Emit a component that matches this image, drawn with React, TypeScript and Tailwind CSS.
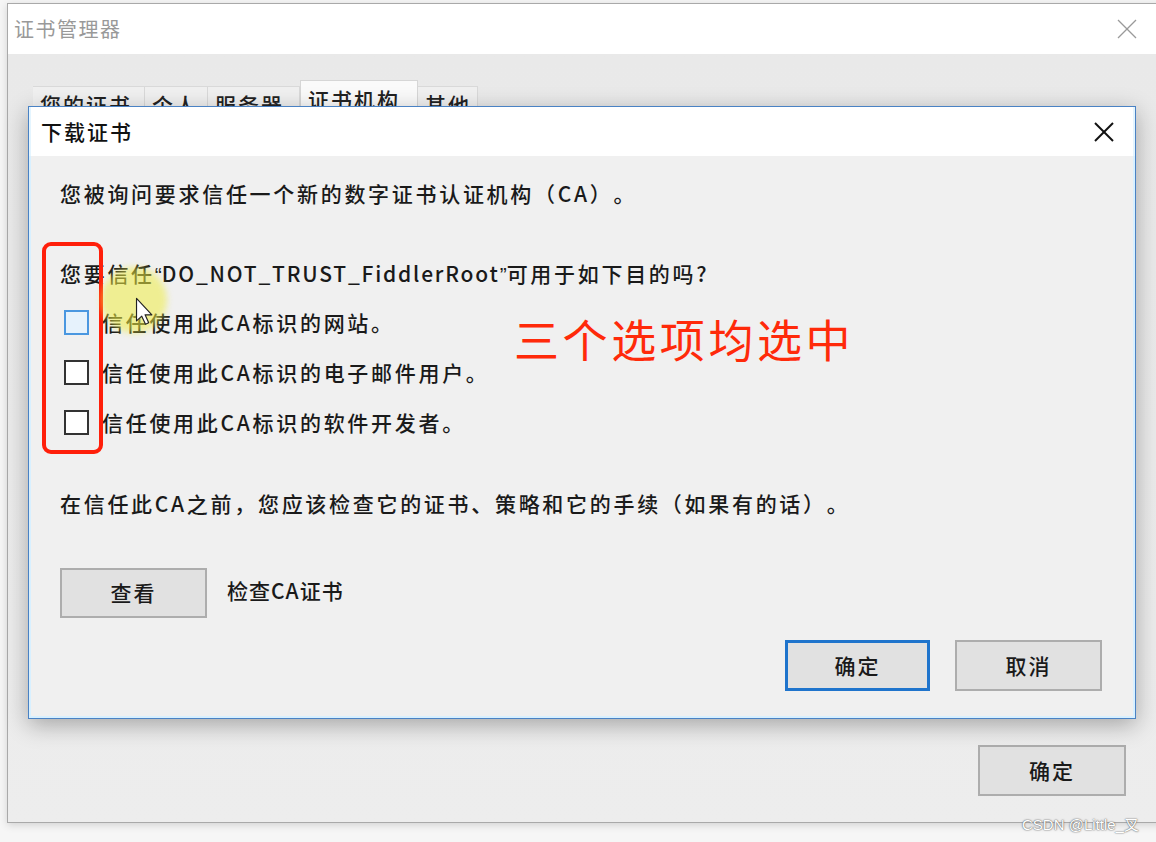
import React from "react";

const CJK = "[font-family:'Noto_Sans_CJK_SC','Noto_Sans',sans-serif] [text-spacing-trim:space-all]";
const Q = "[font-family:'Liberation_Sans',sans-serif] tracking-normal";

function CloseX({ size, color, stroke }: { size: number; color: string; stroke: number }) {
  return (
    <svg width={size} height={size} viewBox="0 0 20 20">
      <line x1="1" y1="1" x2="19" y2="19" stroke={color} strokeWidth={stroke} />
      <line x1="19" y1="1" x2="1" y2="19" stroke={color} strokeWidth={stroke} />
    </svg>
  );
}

function Checkbox({ hover }: { hover?: boolean }) {
  return (
    <div
      className={
        hover
          ? "w-[25px] h-[25px] border-2 border-[#4a97e0] bg-[#e6f2fc] shrink-0"
          : "w-[25px] h-[25px] border-2 border-[#333333] bg-white shrink-0"
      }
    />
  );
}

function Tab({ label, w, selected }: { label: string; w: number; selected?: boolean }) {
  return (
    <div
      className={
        selected
          ? "h-[40px] bg-[#fafafa] border border-b-0 border-[#d6d6d6] flex items-start pt-[4px] pl-[7px] tracking-[2px] text-[21px] leading-[28px] text-[#222] font-medium"
          : "h-[34px] bg-[#f0f0f0] border-t border-r border-[#d9d9d9] flex items-start pt-[3px] pl-[7px] tracking-[2px] text-[21px] leading-[28px] text-[#222] font-medium"
      }
      style={{ width: w }}
    >
      {label}
    </div>
  );
}

export default function App() {
  return (
    <div className={`relative w-[1156px] h-[842px] overflow-hidden bg-[#f6f6f6] ${CJK}`}>
      <div className="flex flex-col pt-[3px]">
        {/* outer window */}
        <div className="ml-[7px] w-[1160px] h-[820px] border border-[#a9a9a9] bg-[#ececec] flex flex-col shadow-[0_2px_8px_rgba(0,0,0,0.15)]">
          <div className="h-[50px] bg-white flex items-center justify-between pl-[6px] pr-[29px]">
            <span className="text-[20px] tracking-[1.5px] text-[#999999]">证书管理器</span>
            <CloseX size={20} color="#9a9a9a" stroke={1.3} />
          </div>
          <div className="flex-1 flex flex-col bg-gradient-to-b from-[#e9e9e9] to-[#ededed]">
            <div className="flex items-end pt-[26px] pl-[25px]">
              <Tab label="您的证书" w={112} />
              <Tab label="个人" w={63} />
              <Tab label="服务器" w={92} />
              <Tab label="证书机构" w={118} selected />
              <Tab label="其他" w={60} />
            </div>
            <div className="flex-1" />
            <div className="flex justify-end pr-[40px] pb-[26px]">
              <div className="w-[148px] h-[51px] bg-[#e1e1e1] border-2 border-[#adadad] flex items-center justify-center text-[21px] tracking-[2px] text-[#1a1a1a] font-medium">
                确定
              </div>
            </div>
          </div>
        </div>
      </div>

      {/* dialog */}
      <div className="absolute left-[28px] top-[106px] w-[1108px] h-[613px] border border-[#4a82c4] shadow-[0_6px_22px_rgba(0,0,0,0.3)] flex flex-col">
        <div className="h-[49px] bg-white flex items-center justify-between pl-[10px] pr-[19px] border-x-2 border-[#e4f5ff]">
          <span className="text-[21px] tracking-[2px] text-[#111] font-medium">下载证书</span>
          <CloseX size={20} color="#111" stroke={2} />
        </div>
        <div className="flex-1 bg-[#f0f0f0] border-x-2 border-b-2 border-[#d8f0ff] pl-[29px] pr-[31px] flex flex-col text-[21px] tracking-[2.7px] text-[#1a1a1a] font-medium">
          <div className="mt-[22px] h-[30px] leading-[30px]">您被询问要求信任一个新的数字证书认证机构（CA）。</div>
          <div className="mt-[50px] h-[30px] leading-[30px]">
            您要信任<span className={Q}>“</span>
            <span className="tracking-[1.8px]">DO_NOT_TRUST_FiddlerRoot</span>
            <span className={Q}>”</span>可用于如下目的吗?
          </div>
          <div className="mt-[9px] flex flex-col">
            <div className="h-[50px] flex items-center pl-[4px] gap-[13px]">
              <Checkbox hover />
              <span className="leading-[30px]">信任使用此CA标识的网站。</span>
            </div>
            <div className="h-[50px] flex items-center pl-[4px] gap-[13px]">
              <Checkbox />
              <span className="leading-[30px]">信任使用此CA标识的电子邮件用户。</span>
            </div>
            <div className="h-[50px] flex items-center pl-[4px] gap-[13px]">
              <Checkbox />
              <span className="leading-[30px]">信任使用此CA标识的软件开发者。</span>
            </div>
          </div>
          <div className="mt-[41px] h-[30px] leading-[30px]">
            在信任此CA之前，您应该检查它的证书、策略和它的手续（如果有的话）。
          </div>
          <div className="mt-[50px] flex items-start gap-[20px]">
            <div className="w-[147px] h-[50px] bg-[#e1e1e1] border-2 border-[#adadad] flex items-center justify-center tracking-[2px]">
              查看
            </div>
            <span className="mt-[7px] leading-[30px] tracking-[1px]">检查CA证书</span>
          </div>
          <div className="mt-[22px] flex justify-end gap-[25px]">
            <div className="w-[145px] h-[51px] bg-[#e1e1e1] border-[3px] border-[#1f74cc] flex items-center justify-center tracking-[2px]">
              确定
            </div>
            <div className="w-[147px] h-[51px] bg-[#e1e1e1] border-2 border-[#adadad] flex items-center justify-center tracking-[2px]">
              取消
            </div>
          </div>
        </div>
      </div>

      {/* red annotation box */}
      <div className="absolute left-[42px] top-[242px] w-[61px] h-[212px] border-[4px] border-[#ff1f0a] rounded-[9px]" />

      {/* annotation text */}
      <div className="absolute left-[514px] top-[310px] text-[45px] leading-[58px] tracking-[3.6px] text-[#ff2a0a]">
        三个选项均选中
      </div>

      {/* cursor highlight */}
      <div className="absolute left-[101px] top-[267px] w-[66px] h-[66px] rounded-full bg-[rgba(238,236,70,0.55)] blur-[3px]" />
      <svg className="absolute left-[135px] top-[297px]" width="19" height="29" viewBox="0 0 13 20">
        <path
          d="M1 1 L1 16.5 L4.6 13.2 L7.2 18.8 L9.4 17.8 L6.9 12.3 L11.6 12.3 Z"
          fill="white"
          stroke="#222"
          strokeWidth="0.8"
          strokeLinejoin="round"
        />
      </svg>

      {/* watermark */}
      <div className="absolute left-[1022px] top-[815px] text-[15px] leading-[20px] text-white [font-family:'Liberation_Sans','Noto_Sans_CJK_SC',sans-serif] [text-shadow:0_0_1px_#555,0_0_2px_#777]">
        CSDN @Little_叉
      </div>
    </div>
  );
}
